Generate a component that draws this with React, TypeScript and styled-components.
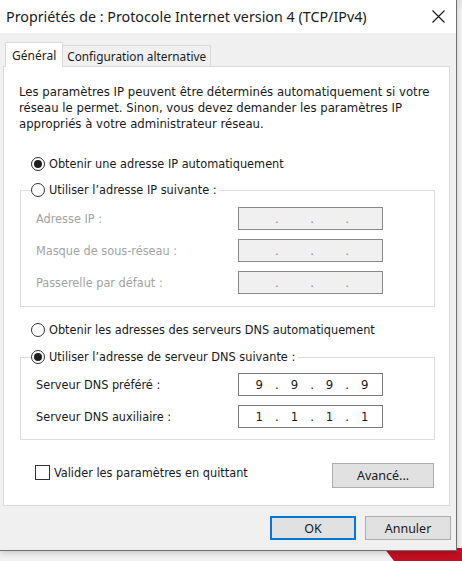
import styled, { createGlobalStyle } from 'styled-components';
import type { ReactNode } from 'react';

const SEGOE = `"Noto Sans", "Open Sans", sans-serif`;
const TAHOMA = `"DejaVu Sans Condensed", "DejaVu Sans", sans-serif`;

const GlobalStyle = createGlobalStyle`
  html, body {
    margin: 0;
    padding: 0;
  }
  body {
    background: #ececec;
    overflow: hidden;
  }
`;

type RadioProps = { checked?: boolean; children: ReactNode };

const Radio = ({ checked, children }: RadioProps) => (
  <RadioRow>
    <RadioCircle $checked={checked} />
    <span>{children}</span>
  </RadioRow>
);

const IpField = ({ value, disabled }: { value?: string[]; disabled?: boolean }) => {
  const parts = value ?? ['', '', '', ''];
  return (
    <FieldBox $disabled={disabled}>
      {parts.map((p, i) => (
        <FieldParts key={i}>
          {i > 0 && <FieldDot>.</FieldDot>}
          <FieldNum>{p}</FieldNum>
        </FieldParts>
      ))}
    </FieldBox>
  );
};

const App = () => (
  <>
    <GlobalStyle />
    <Screen>
      <Dialog>
        <TitleBar>
          <Title>Propriétés de : Protocole Internet version 4 (TCP/IPv4)</Title>
          <CloseButton aria-label="Fermer">
            <svg width="13" height="13" viewBox="0 0 13 13">
              <path d="M0.5 0.5 L12.5 12.5 M12.5 0.5 L0.5 12.5" stroke="#1a1a1a" strokeWidth="1.1" fill="none" />
            </svg>
          </CloseButton>
        </TitleBar>
        <Body>
          <TabList>
            <Tab $active>Général</Tab>
            <Tab>Configuration alternative</Tab>
          </TabList>
          <Panel>
            <Intro>
              Les paramètres IP peuvent être déterminés automatiquement si votre
              <br />
              réseau le permet. Sinon, vous devez demander les paramètres IP
              <br />
              appropriés à votre administrateur réseau.
            </Intro>
            <RadioLine $top={23}>
              <Radio checked>Obtenir une adresse IP automatiquement</Radio>
            </RadioLine>
            <GroupBox $top={8} $padTop={8} $padBottom={12}>
              <Legend>
                <Radio>Utiliser l’adresse IP suivante :</Radio>
              </Legend>
              <FieldGrid>
                <FieldLabel $disabled>Adresse IP :</FieldLabel>
                <IpField disabled />
                <FieldLabel $disabled>Masque de sous-réseau :</FieldLabel>
                <IpField disabled />
                <FieldLabel $disabled>Passerelle par défaut :</FieldLabel>
                <IpField disabled />
              </FieldGrid>
            </GroupBox>
            <RadioLine $top={14}>
              <Radio>Obtenir les adresses des serveurs DNS automatiquement</Radio>
            </RadioLine>
            <GroupBox $top={9} $padTop={7} $padBottom={11}>
              <Legend>
                <Radio checked>Utiliser l’adresse de serveur DNS suivante :</Radio>
              </Legend>
              <FieldGrid>
                <FieldLabel>Serveur DNS préféré :</FieldLabel>
                <IpField value={['9', '9', '9', '9']} />
                <FieldLabel>Serveur DNS auxiliaire :</FieldLabel>
                <IpField value={['1', '1', '1', '1']} />
              </FieldGrid>
            </GroupBox>
            <OptionsRow>
              <CheckRow>
                <CheckBox />
                <span>Valider les paramètres en quittant</span>
              </CheckRow>
              <DialogButton $width={102} $height={25}>Avancé...</DialogButton>
            </OptionsRow>
          </Panel>
          <Footer>
            <DialogButton $primary>OK</DialogButton>
            <DialogButton>Annuler</DialogButton>
          </Footer>
        </Body>
      </Dialog>
      <Backdrop width="80" height="13" viewBox="0 0 80 13">
        <polygon points="2,0 80,0 80,13 12,13" fill="#c40e22" />
      </Backdrop>
    </Screen>
  </>
);

export default App;

const Screen = styled.div`
  position: relative;
  width: 462px;
  height: 561px;
  overflow: hidden;
  background: linear-gradient(#e2e2e2, #f2f2f2 10px);
`;

const Dialog = styled.div`
  position: relative;
  z-index: 1;
  box-sizing: border-box;
  width: 457px;
  height: 551px;
  background: #f0f0f0;
  border-right: 1px solid #6f6f6f;
  border-bottom: 1px solid #6f6f6f;
  box-shadow: 0 2px 6px rgba(0, 0, 0, 0.18);
`;

const TitleBar = styled.div`
  display: flex;
  align-items: center;
  justify-content: space-between;
  height: 33px;
  padding-left: 6px;
  background: #ffffff;
`;

const Title = styled.div`
  font-family: ${SEGOE};
  font-size: 14.3px;
  color: #1a1a1a;
  white-space: nowrap;
`;

const CloseButton = styled.div`
  display: flex;
  align-items: center;
  justify-content: center;
  width: 46px;
  height: 33px;
  margin-right: -5px;
`;

const Body = styled.div`
  padding: 9px 0 0 3px;
`;

const TabList = styled.div`
  display: flex;
  align-items: flex-end;
  padding-left: 2px;
  margin-bottom: -1px;
  position: relative;
  z-index: 1;
`;

const Tab = styled.div<{ $active?: boolean }>`
  box-sizing: border-box;
  display: flex;
  align-items: center;
  height: ${({ $active }) => ($active ? 25 : 22)}px;
  padding: 0 ${({ $active }) => ($active ? 6 : 4)}px;
  margin-left: ${({ $active }) => ($active ? 0 : -1)}px;
  border: 1px solid #d9d9d9;
  border-bottom: ${({ $active }) => ($active ? 'none' : '1px solid #d9d9d9')};
  background: ${({ $active }) => ($active ? '#ffffff' : '#f0f0f0')};
  font-family: ${SEGOE};
  font-size: ${({ $active }) => ($active ? 12 : 11.8)}px;
  color: #1a1a1a;
`;

const Panel = styled.div`
  box-sizing: border-box;
  width: 447px;
  height: 440px;
  padding: 0 14px 0 16px;
  background: #ffffff;
  border: 1px solid #d9d9d9;
  font-family: ${TAHOMA};
  font-size: 12.6px;
  color: #1a1a1a;
`;

const Intro = styled.p`
  margin: 17px 0 0 -1px;
  font-size: 13px;
  line-height: 16px;
`;

const RadioLine = styled.div<{ $top: number }>`
  margin: ${({ $top }) => $top}px 0 0 11px;
`;

const RadioRow = styled.label`
  display: flex;
  align-items: center;
  gap: 4px;
  height: 18px;
  line-height: 16px;
  color: #1a1a1a;
`;

const RadioCircle = styled.span<{ $checked?: boolean }>`
  box-sizing: border-box;
  display: flex;
  align-items: center;
  justify-content: center;
  width: 14px;
  height: 14px;
  border: 1px solid #333333;
  border-radius: 50%;
  background: #ffffff;

  &::after {
    content: '';
    display: ${({ $checked }) => ($checked ? 'block' : 'none')};
    width: 8px;
    height: 8px;
    border-radius: 50%;
    background: #1f1f1f;
  }
`;

const GroupBox = styled.fieldset<{ $top: number; $padTop: number; $padBottom: number }>`
  margin: ${({ $top }) => $top}px 0 0 0;
  padding: ${({ $padTop, $padBottom }) => `${$padTop}px 51px ${$padBottom}px 15px`};
  border: 1px solid #dcdcdc;
  min-width: 0;
`;

const Legend = styled.legend`
  padding: 0 3px 0 0;
  margin-left: -5px;
`;

const FieldGrid = styled.div`
  display: grid;
  grid-template-columns: 1fr 145px;
  row-gap: 9px;
  align-items: center;
`;

const FieldLabel = styled.span<{ $disabled?: boolean }>`
  color: ${({ $disabled }) => ($disabled ? '#a3a3a3' : '#1a1a1a')};
`;

const FieldBox = styled.div<{ $disabled?: boolean }>`
  box-sizing: border-box;
  display: flex;
  justify-content: center;
  align-items: center;
  height: 23px;
  padding-left: 3px;
  border: 1px solid ${({ $disabled }) => ($disabled ? '#8a8a8a' : '#7a7a7a')};
  background: ${({ $disabled }) => ($disabled ? '#f0f0f0' : '#ffffff')};
  color: ${({ $disabled }) => ($disabled ? '#8a8a8a' : '#1a1a1a')};
  font-size: 13px;
`;

const FieldParts = styled.span`
  display: flex;
`;

const FieldNum = styled.span`
  width: 17.6px;
  text-align: center;
`;

const FieldDot = styled.span`
  width: 17.6px;
  text-align: center;
`;

const OptionsRow = styled.div`
  display: flex;
  justify-content: space-between;
  align-items: flex-start;
  margin: 23px 1px 0 15px;
`;

const CheckRow = styled.label`
  display: flex;
  align-items: center;
  gap: 4px;
  height: 16px;
  margin-top: 1px;
`;

const CheckBox = styled.span`
  box-sizing: border-box;
  width: 15px;
  height: 15px;
  border: 1px solid #333333;
  background: #ffffff;
`;

const DialogButton = styled.div<{ $primary?: boolean; $width?: number; $height?: number }>`
  box-sizing: border-box;
  display: flex;
  align-items: center;
  justify-content: center;
  width: ${({ $width }) => $width ?? 86}px;
  height: ${({ $height }) => $height ?? 24}px;
  background: #e1e1e1;
  border: ${({ $primary }) => ($primary ? '2px solid #0078d7' : '1px solid #adadad')};
  font-family: ${SEGOE};
  font-size: 12.5px;
  color: #1a1a1a;
`;

const Footer = styled.div`
  display: flex;
  justify-content: flex-end;
  gap: 9px;
  padding: 10px 5px 0 0;
`;

const Backdrop = styled.svg`
  position: absolute;
  right: 0;
  bottom: 0;
`;
